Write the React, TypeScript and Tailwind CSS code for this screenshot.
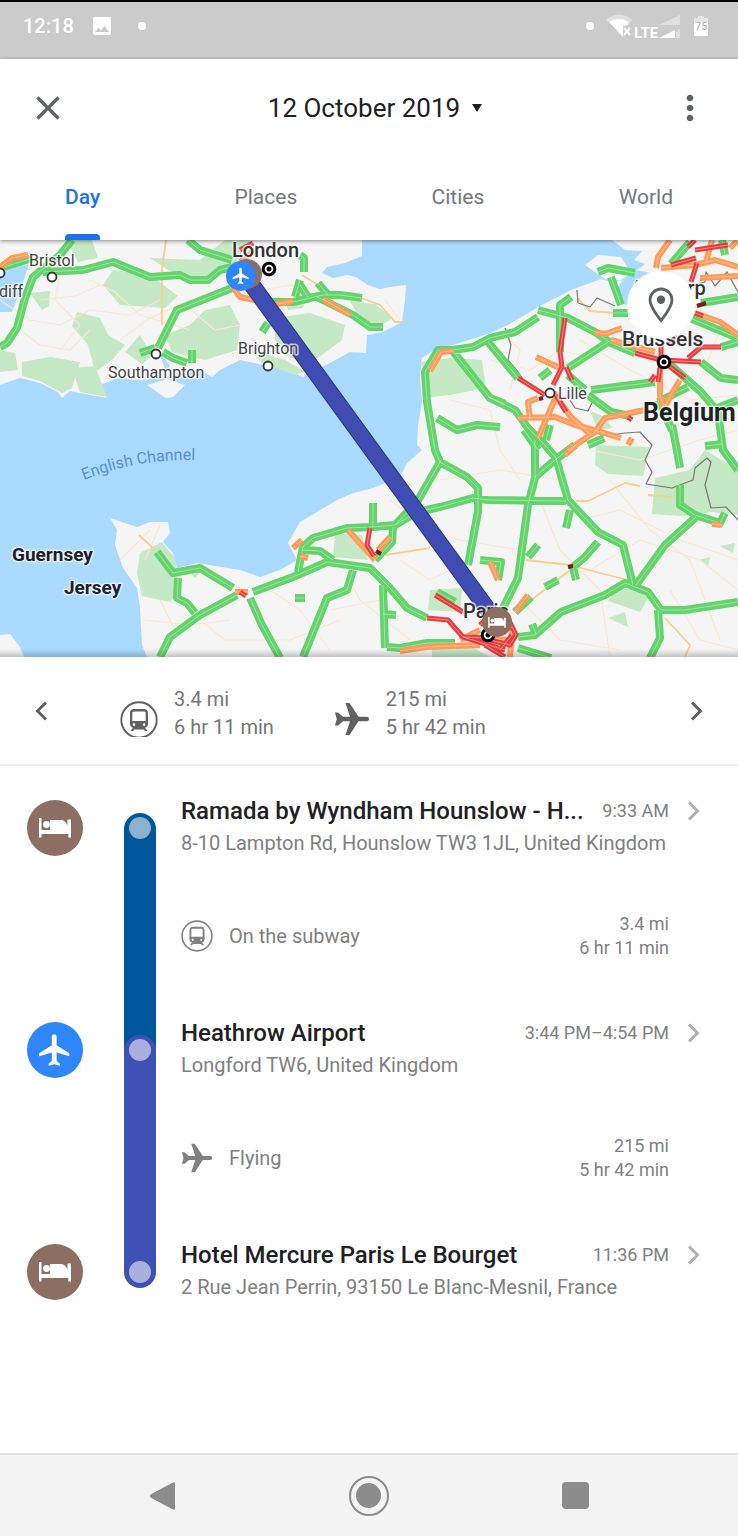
import type { ReactNode } from "react";
import { MdClose, MdFlight, MdImage, MdMoreVert } from "react-icons/md";

const TABS = ["Day", "Places", "Cities", "World"];

type Leg = { kind: "subway" | "plane"; label: string; distance: string; duration: string };
type Stop = {
  kind: "hotel" | "airport";
  name: string;
  address: string;
  time: string;
  rail: string;
  railBehind: string;
  dot: string;
  leg?: Leg;
};

const STOPS: Stop[] = [
  {
    kind: "hotel",
    name: "Ramada by Wyndham Hounslow - H...",
    address: "8-10 Lampton Rd, Hounslow TW3 1JL, United Kingdom",
    time: "9:33 AM",
    rail: "bg-[#01579b] rounded-t-full",
    railBehind: "",
    dot: "bg-[#8cb2d0]",
    leg: { kind: "subway", label: "On the subway", distance: "3.4 mi", duration: "6 hr 11 min" },
  },
  {
    kind: "airport",
    name: "Heathrow Airport",
    address: "Longford TW6, United Kingdom",
    time: "3:44 PM–4:54 PM",
    rail: "bg-[#3f51b5] rounded-t-full",
    railBehind: "bg-[#01579b]",
    dot: "bg-[#a9b0de]",
    leg: { kind: "plane", label: "Flying", distance: "215 mi", duration: "5 hr 42 min" },
  },
  {
    kind: "hotel",
    name: "Hotel Mercure Paris Le Bourget",
    address: "2 Rue Jean Perrin, 93150 Le Blanc-Mesnil, France",
    time: "11:36 PM",
    rail: "bg-[#3f51b5] rounded-b-full",
    railBehind: "",
    dot: "bg-[#a9b0de]",
  },
];

// land, parks and roads all share the same map coordinates
const LAND = [
  "M0 240H362L362 256 345 263 327 267 322 273 333 278 347 275 356 277 368 285 380 289 390 287 406 285 405 300 402 322 383 332 367 335 366 353 350 352 330 363 303 377 290 371 273 367 240 360 220 370 212 377 200 370 175 376 140 380 117 378 100 385 107 398 80 393 70 391 62 398 58 392 40 383 20 378 0 385Z",
  "M147 385 167 379 185 385 173 397 166 398Z",
  "M330 279 345 277 358 288 350 291Z",
  "M738 240H612L625 250 642 251 634 260 645 264 630 275 615 283 601 279 571 290 538 307 508 325 488 334 453 345 437 348 422 358 420 378 422 402 418 425 417 445 422 450 407 463 400 477 373 488 353 493 337 500 300 522 288 543 297 560 280 570 260 577 240 570 197 563 177 568 173 553 163 542 170 533 168 522 150 522 137 527 110 518 117 530 115 545 123 568 137 588 140 608 142 645 147 657H738Z",
  "M585 265 598 255 621 257 628 268 650 273 645 283 605 279Z",
  "M0 635 10 634 20 647 24 657H0Z",
];

const PARKS = [
  "M66 240H92L98 258 78 262Z",
  "M113 270 150 275 178 296 165 308 120 305 103 285Z",
  "M150 258 200 260 225 240 250 240 232 268 200 280 168 270Z",
  "M77 312 100 318 108 335 125 345 112 360 95 372 88 345 72 326Z",
  "M30 293 50 291 49 306 42 310Z",
  "M0 350 15 353 18 370 0 372Z",
  "M22 362 50 357 80 362 72 388 62 393 40 381 22 376Z",
  "M72 368 95 366 107 397 80 392Z",
  "M125 352 140 335 152 356 142 364Z",
  "M165 335 190 325 205 310 230 305 240 325 237 350 205 360 172 352Z",
  "M210 315 222 308 228 328 214 330Z",
  "M275 318 310 313 345 325 342 340 318 358 290 358 275 340Z",
  "M250 350 285 360 305 372 295 375 262 363Z",
  "M350 301 375 304 393 318 380 326 360 318Z",
  "M285 302 306 300 303 308 288 310Z",
  "M422 362 450 358 482 360 486 388 450 395 424 398Z",
  "M140 553 162 542 175 558 180 590 170 602 142 596 137 573Z",
  "M185 566 205 567 195 578Z",
  "M335 533 362 535 368 560 333 557Z",
  "M430 590 462 588 460 612 428 610Z",
  "M432 648 465 643 490 657H432Z",
  "M596 445 650 447 643 476 608 474 595 465Z",
  "M655 478 690 470 705 450 738 470V515L712 512 680 516 652 514Z",
  "M615 588 640 590 648 598 640 612 608 601Z",
  "M590 411 605 417 612 428 598 430Z",
  "M608 618 625 612 628 627Z",
  "M700 560 710 557 708 568Z",
  "M720 546 735 543 733 553Z",
];

const MINOR =
  "M0 300 30 320 60 325 90 310 130 315 160 300M60 275 55 300 80 325 60 350M20 330 40 345 70 350 90 330M90 280 115 292 140 315 190 330M185 305 215 330 240 325M40 300 75 296 100 285M120 340 150 318 190 300M262 290 290 285 330 300M385 300 400 320M150 530 135 545 120 560M160 525 145 560M145 620 190 625 230 620M160 600 180 640M200 620 225 640 290 640 340 620M300 540 340 560 360 600 410 640M330 610 380 600M270 590 300 610 330 650M390 500 430 530 460 540 520 550M400 560 430 580 470 560M440 480 500 470 560 480M450 400 490 410 500 450 520 480M490 360 530 370 560 350 600 360M500 330 520 350 510 390M580 340 630 370 690 400 738 395M590 450 640 460 700 440 738 430M580 520 620 510 680 540 738 560M540 580 590 570 640 540 700 560 738 590M520 600 560 640 620 650M540 500 560 550 600 590 610 657M670 590 700 640 738 650M610 480 650 530 690 560 720 640M560 400 600 440 640 440M690 300 720 330 700 380";

const MAJOR =
  "M166 240 162 268 162 325M362 298 380 305 395 322 403 322M385 555 430 548M576 501 588 501 625 483 640 486M648 495 673 497M526 560 570 565 600 573 632 581M516 612 570 570M665 618 690 645 685 657M577 298 590 311 615 313M302 275 318 285M139 535 155 550";

const GREEN = [
  "M0 268 20 262 33 258",
  "M72 240 60 255 33 277 25 298 17 328 7 343 0 347",
  "M43 272 83 270 113 262 150 277 180 275 190 280 208 280 220 270 232 267",
  "M188 240 200 250 232 260",
  "M232 288 177 310 158 348",
  "M140 353 155 348M163 352 173 358 187 363M192 350V363",
  "M270 302 293 302 323 295 340 295 362 298",
  "M317 297 353 315 370 327 383 327",
  "M300 255 304 258V272M318 283 328 295M300 280 295 297M300 285 308 297M262 332 268 323",
  "M453 350 473 347 490 338 515 332 538 317",
  "M538 310 568 318 595 332 611 343 635 353",
  "M571 297 560 305 560 315 560 352",
  "M453 350 438 350 425 372 427 402 435 450 440 462 417 502 395 525 373 527 347 528 313 538 303 547 298 572",
  "M440 462 467 477 478 488 478 512 468 565",
  "M395 525 417 512 440 507 473 498 488 500 566 501",
  "M535 440V478L528 505 518 578 503 608",
  "M452 350 490 398 515 410 528 428 545 445 556 458 568 500 598 532 623 545 633 585",
  "M437 418 457 430 477 425 500 427M575 445 555 460 535 477",
  "M518 637 535 635 561 612 605 595 625 583 648 592 661 610 685 610 738 602",
  "M658 610 660 638 650 658",
  "M636 585 665 545 696 517",
  "M672 425 676 445 680 468M680 485 680 505 695 515 720 523 725 513",
  "M665 360 701 392 718 412 723 450 738 470",
  "M591 390 655 382M568 368 608 342M588 395 611 412 630 416M488 342 518 378",
  "M701 362 721 378 738 380M701 303 738 297M721 347 738 342",
  "M598 272 608 268 635 273M611 277 621 305M613 313 628 313M690 242 671 264",
  "M658 402 688 387M658 400 672 430M712 410 738 400M722 240 725 255M690 318 738 338",
  "M157 552 173 573 200 568 233 588M253 592 293 577 327 562 370 568 390 588 407 608 427 618",
  "M237 595 200 615 170 637 160 657M178 578 177 598 187 603 195 613",
  "M250 598 262 625 280 658M353 570 347 590 327 598 303 657",
  "M383 585 385 648M387 647 400 648 427 643 455 643M383 614 396 615",
  "M373 503V527M393 527 392 542 375 560M302 550 320 551 333 560",
  "M480 560 501 562 498 580M598 542 585 557 573 567 576 580M538 545 528 557",
  "M570 510 566 528M518 648 551 658M532 624 536 634M515 612 531 597",
  "M488 397 505 404M540 378 550 370M546 440 550 425M524 430 538 450M568 375 585 390",
  "M295 598 305 598M588 445 604 438M705 446 722 444M437 592 455 602M545 587 558 580",
];

const ORANGE = [
  "M0 267 12 258 28 255",
  "M232 286 240 297 255 300M255 250 240 262M272 305 293 301M323 299 350 315",
  "M430 371 441 352 453 351",
  "M595 332 605 334 622 328M611 340 655 352",
  "M536 357 560 368M518 418 555 417 575 425 601 432 621 438M558 392 548 415 538 438M560 402 571 417 591 435",
  "M568 450 595 432 605 418 645 410M660 368 660 395 664 408 674 390 680 380M530 420 528 402 538 398",
  "M656 268 658 257 670 240M661 268 695 265 715 260 738 267M695 313 720 322 738 335M712 240 706 262M700 278 738 276",
  "M348 530 375 560M390 537 378 550M293 548 302 540M300 556 308 558M235 592 248 592",
  "M400 651 427 647 480 645M528 595 515 612M490 562 498 580M565 455 577 444M712 524 722 525",
  "M510 657 512 630M628 445 632 438M460 640 480 630M738 240 730 248M460 637 510 640",
];

const RED = [
  "M565 318 560 352 562 367 553 385M566 367 572 380M518 378 545 395M556 395 566 412",
  "M635 353 661 360 701 362M661 360 685 378M661 362 658 382M688 358 701 347 721 347M661 345V360",
  "M671 265 696 258M695 250 728 245M697 263 691 282M688 247 695 240M695 313 703 316",
  "M370 528 367 545 374 556M427 618 448 620 463 637 487 638M435 595 463 612M463 637 505 650",
  "M508 618 516 635 510 645 490 640M485 645 505 657M500 650 512 635M240 592 246 596M480 625 490 615 512 628M253 243 240 250M670 345 675 335M628 417 632 420M650 382 655 375",
];

const BORDERS =
  "M577 290 578 303 590 307 597 298 615 306M505 328 511 345 508 360 518 372 527 385M570 400 575 408 588 411 592 403M610 435 625 433 640 432 652 445 645 460 652 472 646 484 672 488 693 480 695 468 707 458 711 462 705 485 711 508 726 507 738 520M690 285 705 282 706 272 715 286 727 272 738 292";

type IconProps = { className?: string };

const PlaneRight = ({ className }: IconProps) => (
  <svg viewBox="0 0 36 34" className={className} fill="currentColor" aria-hidden="true">
    <path d="M1 10.500h3l5 4.300h7L11.500 1h4l9 13.800h8.300a2.200 2.200 0 0 1 0 4.400h-8.300L15.500 33h-4L16 19.200H9l-5 4.300H1L2.800 17z" />
  </svg>
);

const Subway = ({ className }: IconProps) => (
  <svg viewBox="0 0 38 38" className={className} fill="none" aria-hidden="true">
    <circle cx="19" cy="19" r="17.700" stroke="currentColor" strokeWidth="1.900" />
    <path
      fill="currentColor"
      fillRule="evenodd"
      d="M15 8h8c3.500 0 5 1.200 5 4.500V23c0 2-1.300 3.500-3 3.800L27.500 30H25l-1.300-1.600h-9.400L13 30h-2.500l2.500-3.200c-1.700-.3-3-1.800-3-3.800V12.500C10 9.200 11.500 8 15 8zM12.300 12v8h13.400v-8c0-1-.7-1.600-2-1.600h-9.400c-1.300 0-2 .6-2 1.600zM14 22.300a1.300 1.300 0 1 0 0 2.600 1.300 1.300 0 0 0 0-2.600zm10 0a1.300 1.300 0 1 0 0 2.600 1.300 1.300 0 0 0 0-2.600z"
    />
  </svg>
);

const Bed = ({ className }: IconProps) => (
  <svg viewBox="0 0 32 20" className={className} fill="currentColor" aria-hidden="true">
    <path d="M0 0h2.500v12H11V2h10c4 0 6 2 7.500 5.500V1.500H32V19.500h-2.700V16H2.500v3.500H0z" />
    <circle cx="7.500" cy="6.500" r="3.400" />
  </svg>
);

const Chevron = ({ className, left = false }: IconProps & { left?: boolean }) => (
  <svg viewBox="0 0 24 24" className={className} fill="none" stroke="currentColor" aria-hidden="true">
    <path d={left ? "M16 3.500 7.500 12l8.500 8.500" : "M8 3.500 16.500 12 8 20.500"} />
  </svg>
);

const StatusBar = () => {
  return (
    <div className="flex h-[59px] items-start justify-between border-t-2 border-black bg-[#cbcbcb] pt-2 pr-[30px] pl-[23px] text-white">
      <div className="flex h-8 items-center">
        <span className="text-xl font-medium">12:18</span>
        <MdImage className="ml-4 size-6" />
        <span className="ml-6 size-2 rounded-full bg-white" />
      </div>
      <div className="flex h-8 items-center">
        <span className="mr-3 size-2 rounded-full bg-white" />
        <svg viewBox="0 0 84 30" className="h-[30px] w-[84px]" fill="white" aria-label="LTE signal">
          <path opacity=".4" d="M0 9C7 2 19 2 26 9l-3 4-20-1z" />
          <path d="M3 11c6-4 14-4 19 0v3l-5 1v11z" />
          <path d="m18 17 6 7m0-7-6 7" stroke="white" strokeWidth="2" />
          <text x="28" y="27" fontSize="15" fontWeight="700">LTE</text>
          <path opacity=".4" d="M53 14 74 4v10zM70 20l4-2v9h-4z" />
          <path d="M53 27l16-8v8z" />
        </svg>
        <svg viewBox="0 0 14 24" className="ml-1 h-6 w-[14px]" aria-label="Battery 75">
          <path fill="white" opacity=".5" d="M4 2h6v2h4v5H0V4h4z" />
          <path fill="white" d="M0 8h14v14H0z" />
          <text x="1" y="16" fontSize="11" fill="#b5b5b5">75</text>
        </svg>
      </div>
    </div>
  );
};

const Header = () => {
  return (
    <header className="relative z-10 bg-white shadow-[0_1px_4px_rgba(0,0,0,0.45)]">
      <div className="flex h-[98px] items-center justify-between px-7">
        <button aria-label="Close" className="text-[#5f6368]">
          <MdClose className="size-10" />
        </button>
        <button className="ml-3 flex items-center gap-3 text-[26px] text-[#202124]">
          12 October 2019
          <svg viewBox="0 0 10 8" className="h-2 w-[10px]" fill="currentColor" aria-hidden="true">
            <path d="M0 0h10L5 8z" />
          </svg>
        </button>
        <button aria-label="More options" className="text-[#5f6368]">
          <MdMoreVert className="size-10" />
        </button>
      </div>
      <nav className="flex h-[83px] justify-between px-[65px] text-[21px]">
        {TABS.map((tab, i) => (
          <button
            key={tab}
            className={
              i === 0
                ? "flex flex-col items-stretch justify-between pt-[25px] font-medium text-[#1a73e8]"
                : "flex flex-col items-stretch justify-between pt-[25px] text-[#73787d]"
            }
          >
            {tab}
            {i === 0 && <span className="h-[6px] rounded-t bg-[#1a73e8]" />}
          </button>
        ))}
      </nav>
    </header>
  );
};

const Roads = ({ paths, color, width }: { paths: string[]; color: string; width: number }) => (
  <g fill="none" strokeLinejoin="round">
    <path d={paths.join("")} stroke={color} strokeWidth={width} />
    <path d={paths.join("")} stroke="#fff" strokeOpacity=".4" strokeWidth="1" />
  </g>
);

const Town = ({ x, y }: { x: number; y: number }) => (
  <circle cx={x} cy={y} r="4.500" fill="#fff" stroke="#333" strokeWidth="1.800" />
);

const Capital = ({ x, y }: { x: number; y: number }) => (
  <g>
    <circle cx={x} cy={y} r="5.800" fill="#fff" stroke="#000" strokeWidth="3" />
    <circle cx={x} cy={y} r="2.500" />
  </g>
);

const MapView = () => {
  return (
    <section className="relative">
      <svg viewBox="0 240 738 417" className="block w-full bg-[#aadaff]" role="img" aria-label="Route map">
        <path d={LAND.join("")} fill="#f5f5f5" />
        <path d={PARKS.join("")} fill="#c5e8c5" />
        <path d="M0 272 13 267 29 265 22 285 12 312H0zM615 290l12-14 15 14-14 18zM158 350l12 16-4 6z" fill="#aadaff" />
        <path d={MINOR} fill="none" stroke="#fae7d3" strokeWidth="1.200" strokeLinejoin="round" />
        <path d={MAJOR} fill="none" stroke="#f9d08b" strokeWidth="1.800" strokeLinejoin="round" />
        <path d={BORDERS} fill="none" stroke="#777" strokeWidth="1.200" strokeLinejoin="round" />
        <Roads paths={GREEN} color="#63d46b" width={8} />
        <Roads paths={ORANGE} color="#ff9a57" width={6} />
        <Roads paths={RED} color="#e83c3c" width={5} />
        <path d="M376 551l5 3M568 567l5-1M697 306l9-3M539 399l4-1" stroke="#7a1a1a" strokeWidth="4" />

        <Town x={52} y={277} />
        <Town x={0} y={273} />
        <Town x={156} y={354} />
        <Town x={268} y={366} />
        <Town x={550} y={393} />
        <Capital x={269} y={269} />
        <Capital x={664} y={362} />
        <Capital x={488} y={635} />

        <path d="M244 274 494 618" stroke="#2b357d" strokeWidth="17" />
        <path d="M244 274 494 618" stroke="#3f4db3" strokeWidth="15" />

        <g stroke="#fff" strokeWidth="3" strokeLinejoin="round" strokeOpacity=".7" paintOrder="stroke" fill="#444" fontSize="16">
          <text x="29" y="266">Bristol</text>
          <text x="-1" y="297">diff</text>
          <text x="108" y="378">Southampton</text>
          <text x="238" y="354">Brighton</text>
          <text x="558" y="399">Lille</text>
          <g fontSize="20" fontWeight="500" fill="#333">
            <text x="232" y="257">London</text>
            <text x="463" y="618">Paris</text>
            <text x="631" y="295">Antwerp</text>
            <text x="622" y="346" fontSize="21">Brussels</text>
          </g>
          <g fontWeight="700" fill="#202124">
            <text x="12" y="561" fontSize="19">Guernsey</text>
            <text x="64" y="594" fontSize="19">Jersey</text>
            <text x="643" y="421" fontSize="25">Belgium</text>
          </g>
        </g>
        <path id="channel" d="M84 480Q135 459 194 460" fill="none" />
        <text fontSize="16" fill="#5b8fd0">
          <textPath href="#channel">English Channel</textPath>
        </text>

        <circle cx="247" cy="274" r="15" fill="#8d6e63" />
        <circle cx="241" cy="276" r="15" fill="#2f86fb" />
        <g transform="translate(231 266) scale(.83)">
          <path fill="#fff" d="M21 16v-2l-8-5V3.500C13 2.700 12.300 2 11.500 2S10 2.700 10 3.500V9l-8 5v2l8-2.500V19l-2 1.500V22l3.500-1 3.500 1v-1.500L13 19v-5.500z" />
        </g>
        <circle cx="497" cy="622" r="15" fill="#8d6e63" />
        <svg x="488" y="617" width="18" height="11" viewBox="0 0 32 20" fill="#fff">
          <path d="M0 0h2.500v12H11V2h10c4 0 6 2 7.500 5.500V1.500H32V19.500h-2.700V16H2.500v3.500H0z" />
          <circle cx="7.500" cy="6.500" r="3.400" />
        </svg>
      </svg>
      <div className="absolute inset-x-0 bottom-0 h-2 bg-linear-to-t from-black/20 to-transparent" />
      <button
        aria-label="Show place"
        className="absolute top-[31px] right-[43px] flex size-[68px] items-center justify-center rounded-full bg-white text-[#5f6368]"
      >
        <svg viewBox="0 0 26 36" className="h-9 w-[26px]" fill="none" aria-hidden="true">
          <path d="M13 2C6.900 2 2 6.800 2 12.800 2 20.500 13 33.500 13 33.500s11-13 11-20.700C24 6.800 19.100 2 13 2z" stroke="currentColor" strokeWidth="2.800" />
          <circle cx="13" cy="12.800" r="4.200" fill="currentColor" />
        </svg>
      </button>
    </section>
  );
};

const SummaryItem = ({ icon, distance, duration }: { icon: ReactNode; distance: string; duration: string }) => (
  <div className="flex items-end gap-4">
    <div className="mb-1 h-9 overflow-hidden">{icon}</div>
    <div className="text-xl leading-7 text-[#757575]">
      <p>{distance}</p>
      <p>{duration}</p>
    </div>
  </div>
);

const Summary = () => {
  return (
    <section className="flex h-[109px] items-center border-b-2 border-[#f0f0f0] px-[30px] text-[#616161]">
      <button aria-label="Previous day">
        <Chevron left className="size-6 stroke-3" />
      </button>
      <div className="ml-[66px] flex flex-1 gap-[60px] pt-1">
        <SummaryItem icon={<Subway className="size-[38px]" />} distance="3.4 mi" duration="6 hr 11 min" />
        <SummaryItem icon={<PlaneRight className="h-9 w-9" />} distance="215 mi" duration="5 hr 42 min" />
      </div>
      <button aria-label="Next day">
        <Chevron className="size-6 stroke-3" />
      </button>
    </section>
  );
};

const StopBadge = ({ kind }: { kind: Stop["kind"] }) =>
  kind === "hotel" ? (
    <div className="-mt-[13px] flex size-14 shrink-0 items-center justify-center rounded-full bg-[#8d6e63] text-white">
      <Bed className="h-5 w-8" />
    </div>
  ) : (
    <div className="-mt-[13px] flex size-14 shrink-0 items-center justify-center rounded-full bg-[#2f86fb] text-white">
      <MdFlight className="size-[38px]" />
    </div>
  );

const StopRow = ({ stop }: { stop: Stop }) => {
  const { leg } = stop;
  return (
    <li className="flex items-start pr-[33px] pl-[27px]">
      <StopBadge kind={stop.kind} />
      <div className={`ml-[41px] w-8 shrink-0 ${leg ? "self-stretch" : "h-[31px]"} ${stop.railBehind}`}>
        <div className={`flex h-full justify-center pt-1 ${stop.rail}`}>
          <span className={`size-[22px] rounded-full ${stop.dot}`} />
        </div>
      </div>
      <div className="-mt-[18px] ml-[25px] min-w-0 flex-1">
        <a href="#" className="block">
          <div className="flex h-8 items-center">
            <h2 className="min-w-0 flex-1 truncate text-2xl font-medium text-[#202124]">{stop.name}</h2>
            <span className="ml-1 text-lg text-[#808080]">{stop.time}</span>
            <Chevron className="ml-3 size-6 stroke-[#b0b0b0] stroke-3" />
          </div>
          <p className="text-xl leading-8 whitespace-nowrap text-[#808080]">{stop.address}</p>
        </a>
        {leg && (
          <div className="mt-[53px] mb-[75px] flex items-center pr-9 text-[#808080]">
            {leg.kind === "subway" ? <Subway className="size-8" /> : <PlaneRight className="h-8 w-8" />}
            <span className="ml-4 flex-1 text-xl">{leg.label}</span>
            <div className="text-right text-lg leading-6">
              <p>{leg.distance}</p>
              <p>{leg.duration}</p>
            </div>
          </div>
        )}
      </div>
    </li>
  );
};

const NavBar = () => {
  return (
    <footer className="mt-auto flex h-[83px] items-center justify-between border-t-2 border-[#e2e2e2] bg-[#f4f4f4] px-[149px] text-[#8c8c8c]">
      <button aria-label="Back">
        <svg viewBox="0 0 26 30" className="h-[30px] w-[26px]" fill="currentColor">
          <path d="M24 1.500Q26 .5 26 2.500v25q0 2-2 1L1.500 16.500q-1.500-1.500 0-3z" />
        </svg>
      </button>
      <button aria-label="Home" className="flex size-10 items-center justify-center rounded-full border-2 border-[#8c8c8c]">
        <span className="size-[25px] rounded-full bg-[#8c8c8c]" />
      </button>
      <button aria-label="Recent apps" className="size-[27px] rounded-sm bg-[#8c8c8c]" />
    </footer>
  );
};

const App = () => {
  return (
    <main className="flex min-h-screen flex-col bg-white font-['Roboto',sans-serif]">
      <StatusBar />
      <Header />
      <MapView />
      <Summary />
      <ul className="pt-[47px]">
        {STOPS.map((stop) => (
          <StopRow key={stop.name} stop={stop} />
        ))}
      </ul>
      <NavBar />
    </main>
  );
};

export default App;
